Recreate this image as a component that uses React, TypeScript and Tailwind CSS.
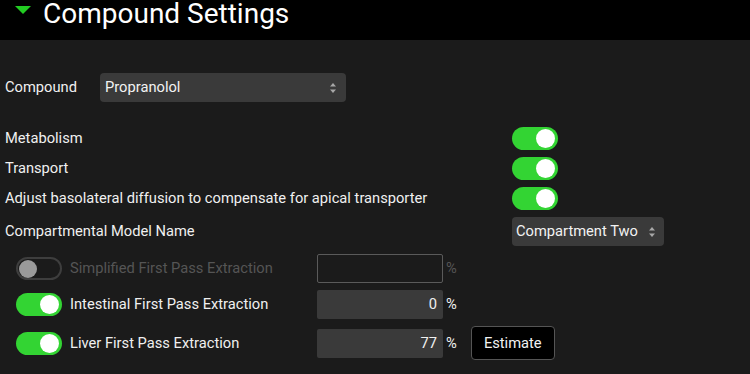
import React from "react";

function Toggle({ on = true, disabled = false }: { on?: boolean; disabled?: boolean }) {
  if (disabled) {
    return (
      <div className="w-[46px] h-[23px] rounded-full border-2 border-[#3e3e3e] bg-[#1b1b1b] flex items-center pl-[1px] shrink-0">
        <div className="w-[18px] h-[18px] rounded-full bg-[#9a9a9a]" />
      </div>
    );
  }
  return (
    <div
      className={
        "w-[46px] h-[23px] rounded-full flex items-center justify-end pr-[3px] shrink-0 " +
        (on ? "bg-[#33d433]" : "bg-[#444]")
      }
    >
      <div className="w-[19px] h-[19px] rounded-full bg-white" />
    </div>
  );
}

function Chevrons() {
  return (
    <svg width="8" height="12" viewBox="0 0 8 12" className="shrink-0">
      <polygon points="4,1 7,4.5 1,4.5" fill="#a8a8a8" />
      <polygon points="1,7.5 7,7.5 4,11" fill="#a8a8a8" />
    </svg>
  );
}

function Select({ value, width, pad }: { value: string; width: string; pad: string }) {
  return (
    <div
      className={
        width +
        " " +
        pad +
        " h-[29px] rounded-[4px] bg-[#3a3a3a] flex items-center justify-between text-[14.7px] text-[#f2f2f2]"
      }
    >
      <span>{value}</span>
      <Chevrons />
    </div>
  );
}

export default function App() {
  return (
    <div
      className="w-[750px] h-[374px] bg-[#1b1b1b] overflow-hidden text-[14.7px] text-[#f0f0f0]"
      style={{ fontFamily: "Roboto, 'Liberation Sans', sans-serif" }}
    >
      <header className="h-[40px] bg-black flex items-start">
        <svg width="16" height="8" viewBox="0 0 16 8" className="ml-[15px] mt-[6px] shrink-0">
          <polygon points="0,0 16,0 8,8" fill="#22cc22" />
        </svg>
        <h1 className="ml-[12px] -mt-[3px] text-[28px] leading-[34px] text-white font-normal">Compound Settings</h1>
      </header>

      <div className="pl-[5px]">
        <div className="mt-[33px] h-[29px] flex items-center">
          <span className="w-[95px]">Compound</span>
          <Select value="Propranolol" width="w-[246px]" pad="pl-[5px] pr-[9px]" />
        </div>

        <div className="mt-[21px] flex flex-col">
          {[
            "Metabolism",
            "Transport",
            "Adjust basolateral diffusion to compensate for apical transporter",
          ].map((label) => (
            <div key={label} className="h-[30px] flex items-center">
              <span className="w-[507px]">{label}</span>
              <Toggle />
            </div>
          ))}
        </div>

        <div className="mt-[4px] h-[29px] flex items-center">
          <span className="w-[507px]">Compartmental Model Name</span>
          <Select value="Compartment Two" width="w-[152px]" pad="pl-[4px] pr-[8px]" />
        </div>
      </div>

      <div className="pl-[16px] mt-[8px] flex flex-col gap-[7px]">
        <div className="h-[29px] flex items-center">
          <Toggle disabled />
          <span className="ml-[8px] w-[247px] text-[#555555]">Simplified First Pass Extraction</span>
          <div className="w-[126px] h-[29px] border border-[#5a5a5a] rounded-[2px]" />
          <span className="ml-[3px] text-[#555555]">%</span>
        </div>
        <div className="h-[29px] flex items-center">
          <Toggle />
          <span className="ml-[8px] w-[247px]">Intestinal First Pass Extraction</span>
          <div className="w-[126px] h-[29px] bg-[#3a3a3a] rounded-[2px] flex items-center justify-end pr-[6px]">0</div>
          <span className="ml-[3px]">%</span>
        </div>
        <div className="h-[34px] flex items-center">
          <Toggle />
          <span className="ml-[8px] w-[247px]">Liver First Pass Extraction</span>
          <div className="w-[126px] h-[29px] bg-[#3a3a3a] rounded-[2px] flex items-center justify-end pr-[6px]">77</div>
          <span className="ml-[3px]">%</span>
          <button className="ml-[14px] w-[84px] h-[34px] bg-black border border-[#555] rounded-[4px] text-[14.7px] text-[#f2f2f2]">
            Estimate
          </button>
        </div>
      </div>
    </div>
  );
}
